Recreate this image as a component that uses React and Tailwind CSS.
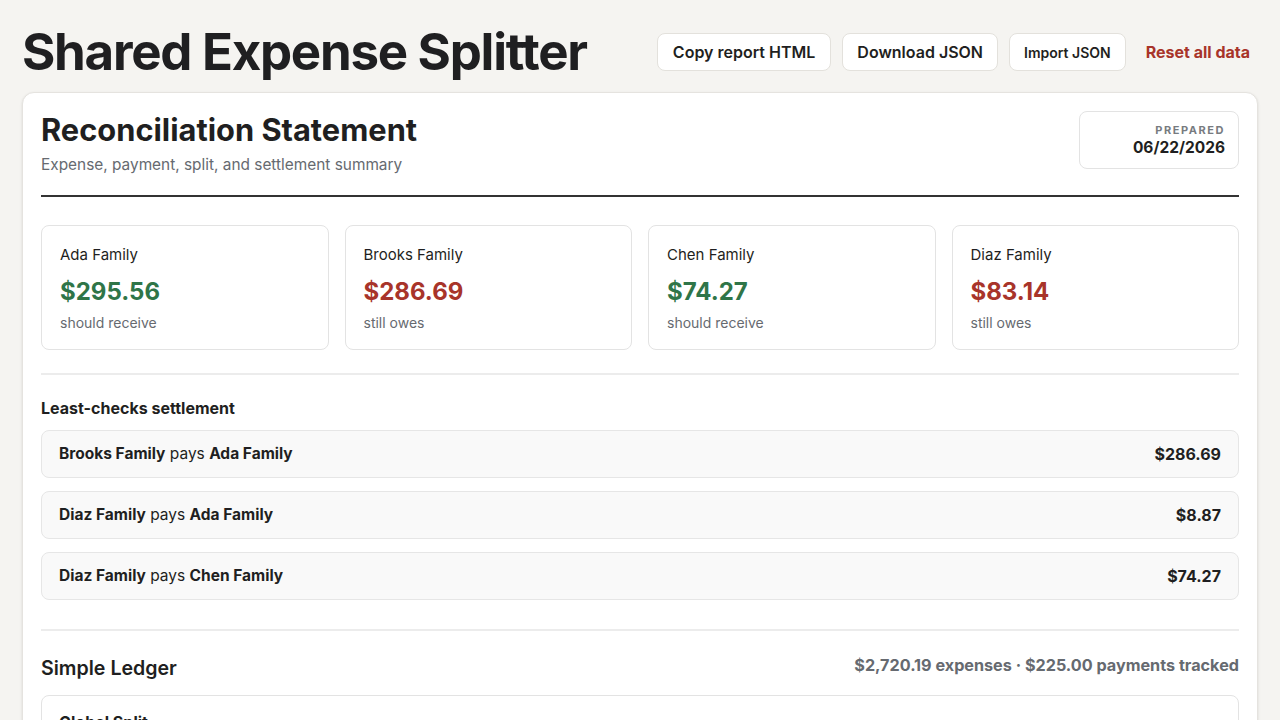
const balances = [
  { name: "Ada Family", amount: "$295.56", owes: false },
  { name: "Brooks Family", amount: "$286.69", owes: true },
  { name: "Chen Family", amount: "$74.27", owes: false },
  { name: "Diaz Family", amount: "$83.14", owes: true },
];

const settlements = [
  { from: "Brooks Family", to: "Ada Family", amount: "$286.69" },
  { from: "Diaz Family", to: "Ada Family", amount: "$8.87" },
  { from: "Diaz Family", to: "Chen Family", amount: "$74.27" },
];

const App = () => {
  return (
    <div
      className="min-h-screen bg-[#f5f4f1] text-[#1f1f21] px-[22px] pb-10"
      style={{ fontFamily: "Inter, 'Noto Sans', sans-serif" }}
    >
      {/* HEADER */}
      <div className="flex items-center justify-between pt-[22px] pb-[10px]">
        <h1 className="text-[51px] leading-[60px] font-bold tracking-tight">
          Shared Expense Splitter
        </h1>

        <div className="flex items-center gap-[11px] pr-[8px]">
          <button className="h-[38px] px-[15px] rounded-lg border border-[#e3e1dc] bg-white text-[16px] font-semibold">
            Copy report HTML
          </button>
          <button className="h-[38px] px-[14px] rounded-lg border border-[#e3e1dc] bg-white text-[16px] font-semibold">
            Download JSON
          </button>
          <button className="h-[38px] px-[14px] rounded-lg border border-[#e3e1dc] bg-white text-[14px] font-semibold">
            Import JSON
          </button>
          <button className="ml-[9px] text-[16px] font-bold text-[#a8342a]">
            Reset all data
          </button>
        </div>
      </div>

      {/* STATEMENT CARD */}
      <div className="bg-white rounded-xl border border-[#e5e3df] shadow-sm p-[18px]">
        {/* ================= TITLE ================= */}
        <div className="flex items-start justify-between pb-[18px] border-b-2 border-[#333333]">
          <div className="pt-[1px]">
            <h2 className="text-[30.8px] leading-[36px] font-bold">
              Reconciliation Statement
            </h2>
            <p className="mt-[5px] text-[15.4px] leading-6 text-[#666a70]">
              Expense, payment, split, and settlement summary
            </p>
          </div>

          <div className="w-[160px] h-[58px] rounded-lg border border-[#e3e3e3] px-[13px] pt-[11px] text-right">
            <div className="text-[11px] leading-[14px] font-bold tracking-[0.14em] text-[#777b80]">
              PREPARED
            </div>
            <div className="text-[15.5px] leading-[22px] font-bold">
              06/22/2026
            </div>
          </div>
        </div>

        {/* ================= BALANCES ================= */}
        <div className="grid grid-cols-4 gap-4 mt-[28px]">
          {balances.map(item => (
            <div
              key={item.name}
              className="rounded-lg border border-[#e3e3e3] px-[18px] pt-[17px] pb-[16px]"
            >
              <div className="text-[15px] leading-6">{item.name}</div>
              <div
                className={`mt-[9px] text-[24px] leading-8 font-bold ${
                  item.owes ? "text-[#a8342a]" : "text-[#2f7548]"
                }`}
              >
                {item.amount}
              </div>
              <div className="mt-[5px] text-[14px] leading-5 text-[#666a70]">
                {item.owes ? "still owes" : "should receive"}
              </div>
            </div>
          ))}
        </div>

        {/* ================= SETTLEMENT ================= */}
        <div className="mt-[23px] border-t-2 border-[#ececec] pt-[21px]">
          <h3 className="text-[16px] leading-6 font-bold">
            Least-checks settlement
          </h3>

          <div className="mt-[10px] space-y-[13px]">
            {settlements.map((row, i) => (
              <div
                key={i}
                className="h-[48px] flex items-center justify-between rounded-lg border border-[#e6e6e6] bg-[#f9f9f9] px-[17px] text-[15.5px]"
              >
                <span>
                  <span className="font-bold">{row.from}</span> pays{" "}
                  <span className="font-bold">{row.to}</span>
                </span>
                <span className="font-bold text-[16px]">{row.amount}</span>
              </div>
            ))}
          </div>
        </div>

        {/* ================= LEDGER ================= */}
        <div className="mt-[29px] border-t-2 border-[#ececec] pt-[23px]">
          <div className="flex items-center justify-between">
            <h3 className="text-[19.6px] leading-7 font-semibold">
              Simple Ledger
            </h3>
            <span className="text-[16.2px] font-bold text-[#666a70] -mt-[6px]">
              $2,720.19 expenses · $225.00 payments tracked
            </span>
          </div>

          <div className="mt-[13px] rounded-lg border border-[#e3e3e3] px-[17px] py-[14px]">
            <div className="text-[16px] font-bold">Global Split</div>
            <div className="mt-2 text-[14px] text-[#666a70]">
              Ada Family · Brooks Family · Chen Family · Diaz Family
            </div>
          </div>
        </div>
      </div>
    </div>
  );
};

export default App;
